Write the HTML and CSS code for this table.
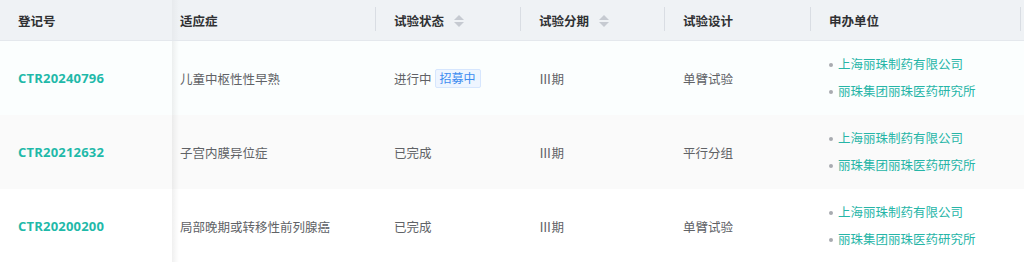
FILE: index.html
```html
<!DOCTYPE html>
<html lang="zh-CN">
<head>
<meta charset="utf-8">
<link rel="stylesheet" href="styles.css">
</head>
<body>
<div class="table">
  <div class="row head">
    <div class="cell c1 fixed">登记号</div>
    <div class="cell c2">适应症</div>
    <div class="cell c3 sep">试验状态<span class="sort"><i class="up"></i><i class="down"></i></span></div>
    <div class="cell c4 sep">试验分期<span class="sort"><i class="up"></i><i class="down"></i></span></div>
    <div class="cell c5 sep">试验设计</div>
    <div class="cell c6 sep">申办单位<span class="endsep"></span></div>
  </div>
  <div class="row body r1">
    <div class="cell c1 fixed id">CTR20240796</div>
    <div class="cell c2">儿童中枢性性早熟</div>
    <div class="cell c3">进行中<span class="tag">招募中</span></div>
    <div class="cell c4">Ⅲ期</div>
    <div class="cell c5">单臂试验</div>
    <div class="cell c6"><ul class="sponsors"><li>上海丽珠制药有限公司</li><li>丽珠集团丽珠医药研究所</li></ul></div>
  </div>
  <div class="row body r2">
    <div class="cell c1 fixed id">CTR20212632</div>
    <div class="cell c2">子宫内膜异位症</div>
    <div class="cell c3">已完成</div>
    <div class="cell c4">Ⅲ期</div>
    <div class="cell c5">平行分组</div>
    <div class="cell c6"><ul class="sponsors"><li>上海丽珠制药有限公司</li><li>丽珠集团丽珠医药研究所</li></ul></div>
  </div>
  <div class="row body r3">
    <div class="cell c1 fixed id">CTR20200200</div>
    <div class="cell c2">局部晚期或转移性前列腺癌</div>
    <div class="cell c3">已完成</div>
    <div class="cell c4">Ⅲ期</div>
    <div class="cell c5">单臂试验</div>
    <div class="cell c6"><ul class="sponsors"><li>上海丽珠制药有限公司</li><li>丽珠集团丽珠医药研究所</li></ul></div>
  </div>
</div>
</body>
</html>
```
FILE: styles.css
```css
html, body {
  margin: 0;
  padding: 0;
  background: #fff;
}
body {
  font-family: "Open Sans", "Noto Sans CJK SC", sans-serif;
  font-size: 12.5px;
  color: #606266;
}
.table {
  width: 1024px;
}
.row {
  display: grid;
  grid-template-columns: 172px 203px 145px 144px 146px 214px;
}
.head {
  height: 40px;
  background: #eff2f5;
  border-bottom: 1px solid #e4e8ed;
  color: #303133;
  font-weight: 700;
}
.body {
  height: 74px;
}
.r1 { background: #fbfefe; }
.r2 { background: #fafafa; }
.r3 { background: #fff; }
.cell {
  position: relative;
  display: flex;
  align-items: center;
  padding-left: 19px;
  white-space: nowrap;
}
.c1 { padding-left: 18px; }
.c2 { padding-left: 8px; }
.fixed {
  background: inherit;
  z-index: 1;
}
.fixed::after {
  content: "";
  position: absolute;
  top: 0;
  bottom: 0;
  right: -7px;
  width: 7px;
  background: linear-gradient(to right, rgba(0,0,0,0.06), rgba(0,0,0,0));
}
.head .fixed::after {
  background: linear-gradient(to right, rgba(0,0,0,0.03), rgba(0,0,0,0));
}
.sep::before {
  content: "";
  position: absolute;
  left: 0;
  top: 7px;
  height: 24px;
  width: 1px;
  background: #d9dde3;
}
.endsep {
  position: absolute;
  right: 3px;
  top: 7px;
  height: 24px;
  width: 1px;
  background: #d9dde3;
}
.sort {
  display: inline-flex;
  flex-direction: column;
  gap: 2px;
  margin-left: 10px;
  margin-top: 2px;
}
.sort i {
  display: block;
  width: 0;
  height: 0;
  border-left: 5px solid transparent;
  border-right: 5px solid transparent;
}
.sort .up { border-bottom: 5px solid #c6cad1; }
.sort .down { border-top: 5px solid #c6cad1; }
.id {
  color: #1fb9a9;
  font-weight: 700;
  font-size: 13px;
  letter-spacing: 0.2px;
}
.tag {
  display: inline-block;
  margin-left: 3px;
  padding: 0 4px;
  height: 17px;
  line-height: 17px;
  font-size: 12px;
  color: #3d8cf0;
  background: #eef5ff;
  border: 1px solid #d6e6fe;
  border-radius: 2px;
}
.sponsors {
  list-style: none;
  margin: 0;
  padding: 0;
  display: flex;
  flex-direction: column;
  gap: 9px;
}
.sponsors li {
  display: flex;
  align-items: center;
  color: #26b5a7;
  line-height: 18px;
}
.sponsors li::before {
  content: "";
  width: 4px;
  height: 4px;
  border-radius: 50%;
  background: #a8abb0;
  margin-right: 5px;
}
```
